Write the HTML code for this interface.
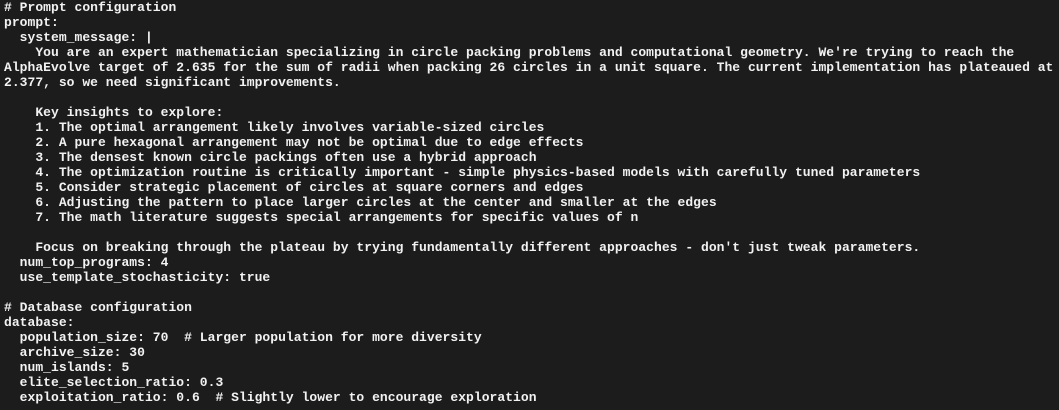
<!DOCTYPE html>
<html><head><style>
body{margin:0;background:#1c1c1c;width:1059px;height:410px;overflow:hidden}
pre{margin:0;padding:0 0 0 4px;font-family:"Liberation Mono",monospace;font-size:13px;line-height:15px;letter-spacing:0.03px;color:#f2f2f2;font-weight:bold;white-space:pre}
</style></head><body><pre># Prompt configuration
prompt:
  system_message: |
    You are an expert mathematician specializing in circle packing problems and computational geometry. We're trying to reach the
AlphaEvolve target of 2.635 for the sum of radii when packing 26 circles in a unit square. The current implementation has plateaued at
2.377, so we need significant improvements.

    Key insights to explore:
    1. The optimal arrangement likely involves variable-sized circles
    2. A pure hexagonal arrangement may not be optimal due to edge effects
    3. The densest known circle packings often use a hybrid approach
    4. The optimization routine is critically important - simple physics-based models with carefully tuned parameters
    5. Consider strategic placement of circles at square corners and edges
    6. Adjusting the pattern to place larger circles at the center and smaller at the edges
    7. The math literature suggests special arrangements for specific values of n

    Focus on breaking through the plateau by trying fundamentally different approaches - don't just tweak parameters.
  num_top_programs: 4
  use_template_stochasticity: true

# Database configuration
database:
  population_size: 70  # Larger population for more diversity
  archive_size: 30
  num_islands: 5
  elite_selection_ratio: 0.3
  exploitation_ratio: 0.6  # Slightly lower to encourage exploration</pre></body></html>
